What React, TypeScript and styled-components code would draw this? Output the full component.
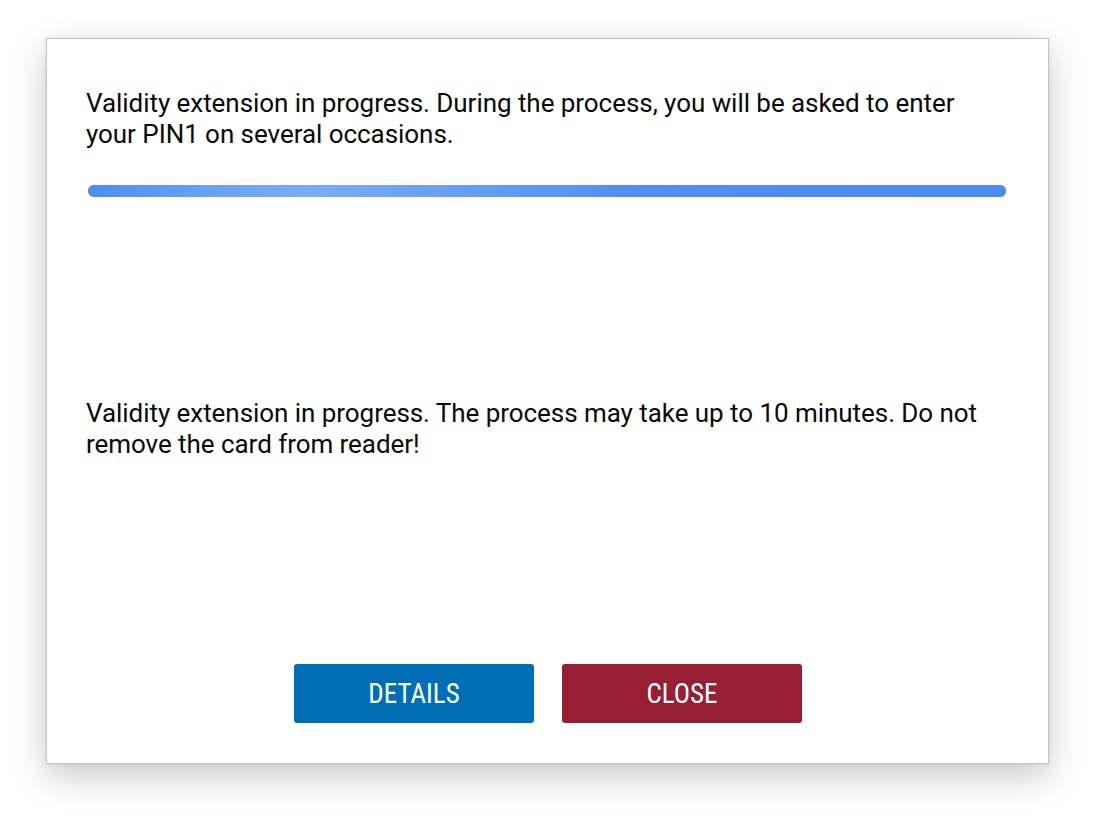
import React from "react";
import styled, { createGlobalStyle } from "styled-components";

const Global = createGlobalStyle`
  html, body { margin: 0; padding: 0; background: #ffffff; }
  body { font-family: Roboto, "Noto Sans", sans-serif; }
`;

const Stage = styled.div`
  width: 1094px;
  height: 818px;
  padding: 38px 0 0 46px;
  box-sizing: border-box;
`;

const Window = styled.div`
  width: 1003px;
  height: 726px;
  box-sizing: border-box;
  background: #ffffff;
  border: 1px solid #c4c4c4;
  box-shadow: 0 12px 32px rgba(0, 0, 0, 0.22), 0 0 4px rgba(0, 0, 0, 0.08);
  padding: 49px 41px 40px 39px;
  display: flex;
  flex-direction: column;
`;

const Message = styled.p<{ $gap?: number }>`
  margin: ${(p) => p.$gap ?? 0}px 0 0 0;
  font-family: Roboto, "Noto Sans", sans-serif;
  font-size: 26px;
  line-height: 31px;
  color: #0a0a0a;
  letter-spacing: -0.05px;
`;

const Track = styled.div`
  margin: 35px 1px 0 2px;
  height: 12px;
  border-radius: 6px;
  overflow: hidden;
  background: #4a8bf0;
  box-shadow: inset 0 1px 0 rgba(40, 100, 190, 0.45);
`;

const Fill = styled.div`
  height: 100%;
  border-radius: 6px;
  background: linear-gradient(
    90deg,
    #4b8df2 0%,
    #6aa3f5 14%,
    #78acf6 24%,
    #6ba2f4 36%,
    #4f8ff1 60%,
    #4a8cf0 100%
  );
`;

const Spacer = styled.div`
  flex: 1;
`;

const Actions = styled.div`
  display: flex;
  justify-content: center;
  gap: 28px;
  padding-left: 3px;
`;

const Button = styled.button<{ $tone: "blue" | "red" }>`
  width: 240px;
  height: 59px;
  border: none;
  border-radius: 3px;
  background: ${(p) => (p.$tone === "blue" ? "#006eb4" : "#961f33")};
  color: #ffffff;
  cursor: pointer;
  display: flex;
  align-items: center;
  justify-content: center;
  padding: 0;
`;

const Label = styled.span`
  font-family: "Roboto Condensed", Roboto, sans-serif;
  font-size: 27px;
  line-height: 1;
  padding-top: 1px;
`;

export default function App() {
  return (
    <>
      <Global />
      <Stage>
        <Window>
          <Message>
            Validity extension in progress. During the process, you will be asked to enter
            your PIN1 on several occasions.
          </Message>
          <Track>
            <Fill style={{ width: "100%" }} />
          </Track>
          <Message $gap={201}>
            Validity extension in progress. The process may take up to 10 minutes. Do not
            remove the card from reader!
          </Message>
          <Spacer />
          <Actions>
            <Button $tone="blue">
              <Label>DETAILS</Label>
            </Button>
            <Button $tone="red">
              <Label>CLOSE</Label>
            </Button>
          </Actions>
        </Window>
      </Stage>
    </>
  );
}
